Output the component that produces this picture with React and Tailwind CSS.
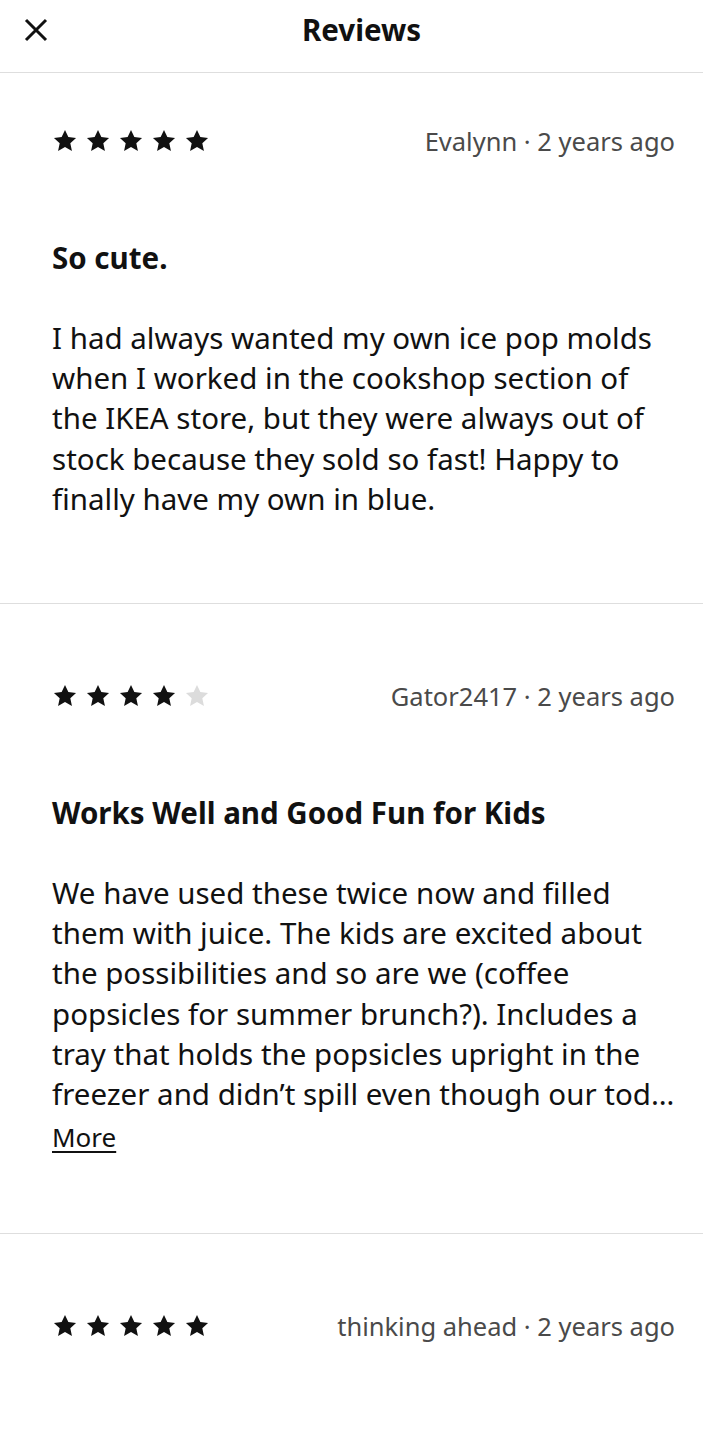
import React from "react";

const reviews = [
  {
    rating: 5,
    author: "Evalynn",
    when: "2 years ago",
    title: "So cute.",
    body: "I had always wanted my own ice pop molds when I worked in the cookshop section of the IKEA store, but they were always out of stock because they sold so fast! Happy to finally have my own in blue.",
  },
  {
    rating: 4,
    author: "Gator2417",
    when: "2 years ago",
    title: "Works Well and Good Fun for Kids",
    body: "We have used these twice now and filled them with juice. The kids are excited about the possibilities and so are we (coffee popsicles for summer brunch?). Includes a tray that holds the popsicles upright in the freezer and didn\u2019t spill even though our tod\u2026",
    more: true,
  },
  {
    rating: 5,
    author: "thinking ahead",
    when: "2 years ago",
    title: "Fun and easy to use",
    body: "",
  },
];

function Star({ filled }) {
  return (
    <svg width="26" height="26" viewBox="0 0 24 24" className={filled ? "text-[#111]" : "text-[#dcdcdc]"}>
      <path
        fill="currentColor"
        d="M12 1.8l3.1 6.6 7.1.8-5.3 4.9 1.5 7.1L12 17.6l-6.4 3.6 1.5-7.1-5.3-4.9 7.1-.8L12 1.8z"
      />
    </svg>
  );
}

function Review({ r, first }) {
  return (
    <div className={"border-b border-[#dedede] pl-[52px] pr-[28px] " + (first ? "pt-[55px]" : "pt-[79px]") + " pb-[84px]"}>
      <div className="flex items-center justify-between h-[26px]">
        <div className="flex gap-[7px]">
          {[1, 2, 3, 4, 5].map((i) => (
            <Star key={i} filled={i <= r.rating} />
          ))}
        </div>
        <div className="text-[25.5px] text-[#4a4a4a]">
          {r.author} · {r.when}
        </div>
      </div>
      <h2 className="mt-[84px] text-[29.5px] font-bold leading-[40px] text-[#111]">{r.title}</h2>
      {r.body && (
        <p className="mt-[40px] text-[29.5px] leading-[40.2px] text-[#111]">{r.body}</p>
      )}
      {r.more && (
        <div className="mt-[3px] -mb-[8px] text-[26px] leading-[40px] text-[#111] underline underline-offset-4">More</div>
      )}
    </div>
  );
}

export default function App() {
  return (
    <div className="min-h-screen bg-white font-['Noto_Sans',sans-serif]">
      <header className="relative h-[73px] border-b border-[#dedede] flex items-center justify-center">
        <button className="absolute left-[23px] top-[17px] text-[#111]">
          <svg width="26" height="26" viewBox="0 0 26 26" stroke="currentColor" strokeWidth="3" fill="none">
            <path d="M3 3l20 20M23 3L3 23" />
          </svg>
        </button>
        <h1 className="text-[29.5px] font-bold text-[#111] -mt-[12px] ml-[20px]">Reviews</h1>
      </header>
      {reviews.map((r, i) => (
        <Review key={i} r={r} first={i === 0} />
      ))}
    </div>
  );
}
